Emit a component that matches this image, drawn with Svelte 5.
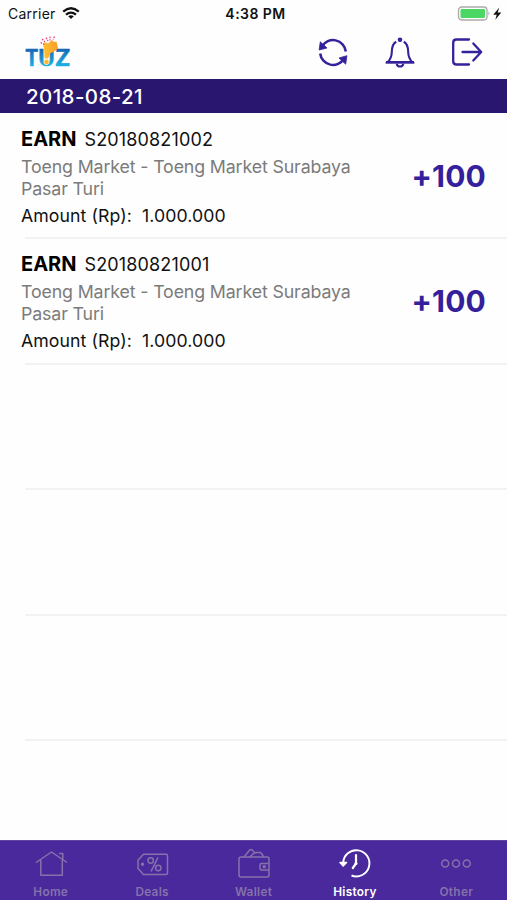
<script>
  const rows = [
    { type: 'EARN', code: 'S20180821002', place: 'Toeng Market - Toeng Market Surabaya Pasar Turi', amount: '1.000.000', points: '+100' },
    { type: 'EARN', code: 'S20180821001', place: 'Toeng Market - Toeng Market Surabaya Pasar Turi', amount: '1.000.000', points: '+100' },
    null,
    null,
    null
  ];
  const tabs = ['Home', 'Deals', 'Wallet', 'History', 'Other'];
</script>

<div class="app">
  <header class="status">
    <div class="carrier">
      <span>Carrier</span>
      <svg width="18" height="13" viewBox="0 0 18 13" fill="none" stroke="#111" stroke-width="2.3">
        <path d="M1.2 4.600Q9-2 16.800 4.600M4 7.700Q9 3.500 14 7.700" />
        <path d="M6.200 9.200Q9 7.100 11.800 9.200L9 12.100Z" fill="#111" stroke="none" />
      </svg>
    </div>
    <div class="time">4:38 PM</div>
    <svg class="battery" width="46" height="16" viewBox="0 0 46 16">
      <rect x="1.500" y="1" width="28.500" height="13" rx="3.200" fill="#fff" stroke="#aaa" stroke-width="1.300" />
      <rect x="3.500" y="3" width="24.500" height="9" rx="1.200" fill="#4bd763" />
      <path d="M31.500 5.300Q33.500 7.500 31.500 9.700Z" fill="#aaa" />
      <path d="M42.300 1.500L36.300 8.700h3.400l-1.400 5 6-7.300h-3.700z" fill="#111" />
    </svg>
  </header>

  <nav class="bar">
    <svg class="logo" width="48" height="36" viewBox="0 0 48 36">
      <defs>
        <linearGradient id="blue" gradientUnits="userSpaceOnUse" x1="0" y1="14" x2="0" y2="31">
          <stop offset="0" stop-color="#1767b5" />
          <stop offset="1" stop-color="#19b2e5" />
        </linearGradient>
        <linearGradient id="gold" x1="0" y1="0" x2="1" y2="0">
          <stop offset="0" stop-color="#ffc331" />
          <stop offset="1" stop-color="#f99b28" />
        </linearGradient>
      </defs>
      <g fill="url(#blue)" stroke="url(#blue)" stroke-width=".5" stroke-linejoin="round" font-family="Lato, sans-serif" font-weight="900">
        <text x="1.500" y="31" font-size="22" textLength="12.500" lengthAdjust="spacingAndGlyphs">T</text>
        <text x="14.300" y="31" font-size="22" textLength="16.500" lengthAdjust="spacingAndGlyphs">U</text>
        <text x="31.500" y="31" font-size="22" textLength="14.500" lengthAdjust="spacingAndGlyphs">Z</text>
      </g>
      <path d="M19 9q2.500-2.500 5-.5l4-3.500 2 2 2.500-.5 1.500 7-4.500 3.500-3 1-2.500 5.500h-3.500l-.3-8z" fill="url(#gold)" />
      <circle cx="22.500" cy="27" r="2.700" fill="#ffb628" stroke="#fff" stroke-width=".7" />
      <g stroke="#ef4775" stroke-width="1.300" stroke-dasharray="1.800 1" fill="none">
        <path d="M16.500 7.500l4 2M18 4l3 3M22 2.500l2 3.500M26 1.500v4M30.500 1.500l-1.500 3" />
      </g>
    </svg>
    <div class="actions">
      <svg width="32" height="32" viewBox="0 0 32 32" fill="none" stroke="#33229b" stroke-width="2.500">
        <path d="M5 9.500A12.800 12.800 0 0 1 28.800 14.500M3.200 16.500A12.800 12.800 0 0 0 27 21.500" />
        <path d="M3.300 4.800L2.100 13 10 11ZM28.700 27.200L29.900 18.700 22 21Z" fill="#33229b" stroke-width=".8" stroke-linejoin="round" />
      </svg>
      <svg width="32" height="32" viewBox="0 0 32 32" fill="none" stroke="#33229b" stroke-width="2.100">
        <circle cx="16" cy="2.700" r="2.300" fill="#33229b" stroke="none" />
        <path d="M12.300 4.800C8.500 6.600 7.900 10.500 7.800 15C7.700 20 6.500 22.500 3.500 25.300H28.500C25.500 22.500 24.300 20 24.200 15C24.100 10.500 23.500 6.600 19.700 4.800" />
        <path d="M2 25.300H30" stroke-width="2.600" />
        <path d="M12.700 26.700Q13.200 29.500 16 29.500T19.300 26.700" />
      </svg>
      <svg width="32" height="32" viewBox="0 0 32 32" fill="none" stroke="#33229b" stroke-width="2.300" stroke-linecap="round" stroke-linejoin="round">
        <path d="M18 2.500H5.500Q2.200 2.500 2.200 5.800V24.200Q2.200 27.500 5.500 27.500H18M11.500 15H30M22.300 6.500L30.200 15 22.300 23.500" />
      </svg>
    </div>
  </nav>

  <h1 class="date"><span>2018-08-21</span></h1>

  <main>
    {#each rows as row}
      <section class="row">
        {#if row}
          <div class="info">
            <div class="head"><b>{row.type}</b><span>{row.code}</span></div>
            <p class="place">{row.place}</p>
            <div class="amount"><span>Amount (Rp):</span><span class="value">{row.amount}</span></div>
          </div>
          <strong class="points">{row.points}</strong>
        {/if}
      </section>
    {/each}
  </main>

  <footer class="tabs">
    {#each tabs as tab}
      <div class="tab" class:active={tab === 'History'}>
        <svg width="34" height="32" viewBox="0 0 34 32" fill="none" stroke="currentColor" stroke-width="1.500" stroke-linejoin="round">
          {#if tab === 'Home'}
            <path d="M2 14.500L17.500 4 33 14.500M6.800 12V27.300H28.300V12M25 5.500h3.800v6" />
          {:else if tab === 'Deals'}
            <path d="M8.500 6.300H31Q32.500 6.300 32.500 7.800V25Q32.500 26.500 31 26.500H8.500L3 20.500V12.300Z" />
            <circle cx="7.500" cy="16.300" r="1" fill="currentColor" />
            <circle cx="15.700" cy="12.500" r="2.700" />
            <circle cx="23.300" cy="20" r="2.700" />
            <path d="M23 9.500L16 23.300" />
          {:else if tab === 'Wallet'}
            <rect x="2" y="9" width="30" height="20" rx="2" />
            <path d="M7 9L12.500 2.300Q14 .8 15.600 2.400L18 5M13 9Q16 5 19.500 4.500H23Q25 5 26.500 9M32 15.500H24.500Q23 15.500 23 17V20.500Q23 22 24.500 22H32" />
            <rect x="25.700" y="17.200" width="3" height="3" fill="currentColor" stroke="none" />
          {:else if tab === 'History'}
            <path d="M5.200 15A13.100 13.100 0 1 1 13.500 27.500" stroke-width="1.900" />
            <path d="M2 14.500H8.500L5.200 18Z" fill="currentColor" />
            <path d="M18 7V15.500L14.800 20" stroke-width="2.200" stroke-linecap="round" />
            <circle cx="18" cy="15.500" r="1.500" fill="currentColor" stroke="none" />
          {:else}
            <circle cx="6.200" cy="15.500" r="3.500" />
            <circle cx="17" cy="15.500" r="3.500" />
            <circle cx="27.800" cy="15.500" r="3.500" />
          {/if}
        </svg>
        <span>{tab}</span>
      </div>
    {/each}
  </footer>
</div>

<style>
  :global(body) { margin: 0; background: #fff; }
  .app { width: 507px; height: 900px; overflow: hidden; display: flex; flex-direction: column; background: #fefefe; font-family: Inter, "Liberation Sans", sans-serif; color: #111; }
  svg { display: block; flex: none; }
  .status { height: 28px; display: grid; grid-template-columns: 1fr auto 1fr; align-items: center; box-sizing: border-box; padding: 0 4px 1px 8px; }
  .carrier { display: flex; align-items: center; gap: 6px; font-size: 14px; letter-spacing: .25px; }
  .time { font-size: 14px; font-weight: 600; letter-spacing: .45px; }
  .battery { justify-self: end; }
  .bar { height: 51px; display: flex; align-items: center; justify-content: space-between; box-sizing: border-box; padding: 0 24px 2px; }
  .actions { display: flex; gap: 35px; }
  .date { margin: 0; height: 34px; box-sizing: border-box; padding: 1px 26px 0; display: flex; align-items: center; background: #29166f; color: #fff; font-size: 20.5px; font-weight: 500; letter-spacing: .4px; }
  main { flex: 1; min-height: 0; padding-top: 1px; }
  .row { height: 125.4px; box-sizing: border-box; padding-left: 21px; padding-right: 21px; display: flex; justify-content: space-between; background: linear-gradient(#f2f2f2, #f2f2f2) 25px 100% / 100% 2px no-repeat; }
  .info { width: 350px; padding-top: 13px; }
  .head { height: 25px; line-height: 25px; display: flex; gap: 8px; font-size: 18px; letter-spacing: .15px; }
  .head b { font-size: 20px; font-weight: 700; color: #000; letter-spacing: 0; }
  .place { margin: 4px 0 0; font-size: 17.8px; line-height: 21.5px; letter-spacing: -.14px; color: #7b7b7b; }
  .amount { margin-top: 6px; line-height: 22px; font-size: 17.7px; letter-spacing: .08px; display: flex; gap: 10px; }
  .points { margin-top: 43px; font-size: 30px; line-height: 38px; font-weight: 700; color: #35209b; letter-spacing: .2px; }
  .tabs { height: 60px; display: flex; background: #4a299d; border-top: 1px solid #5e469f; box-sizing: border-box; }
  .tab { flex: 1; display: flex; flex-direction: column; align-items: center; padding-top: 7px; color: #8572aa; }
  .tab span { font-size: 11.8px; font-weight: 600; line-height: 15px; margin-top: 5px; letter-spacing: .3px; }
  .tab.active { color: #fff; }
</style>
